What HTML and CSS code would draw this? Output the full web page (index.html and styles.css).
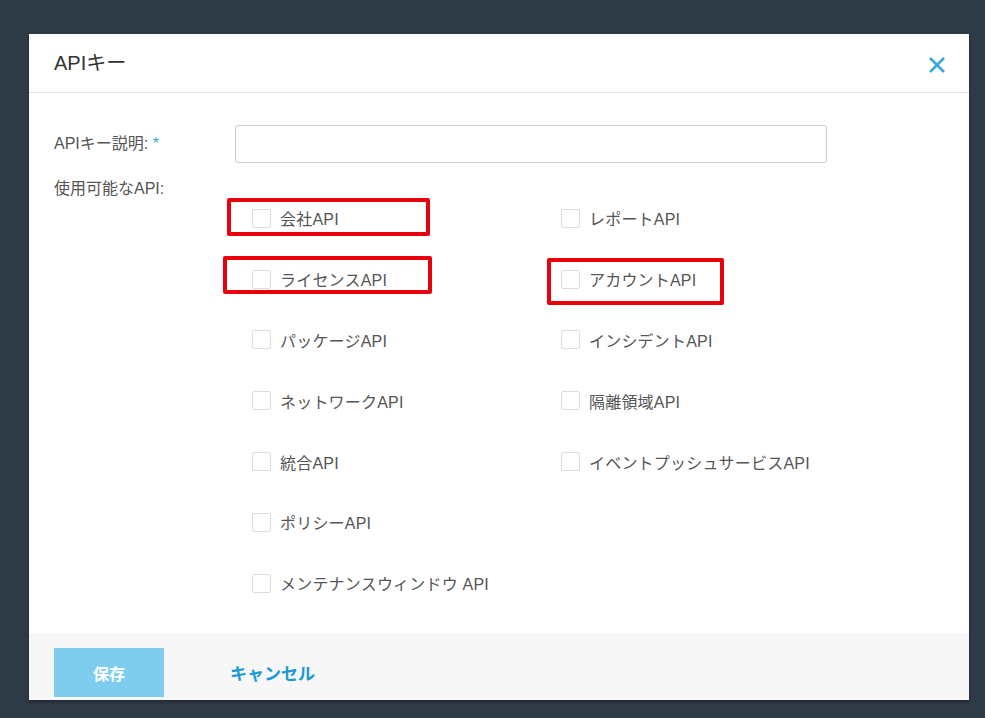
FILE: index.html
```html
<!DOCTYPE html>
<html lang="ja">
<head>
    <meta charset="UTF-8">
    <title>APIキー</title>
    <link rel="stylesheet" href="styles.css">
</head>
<body>
    <div class="modal">
        <!-- Header -->
        <div class="modal-header">
            <h2 class="modal-title">APIキー</h2>
            <span class="modal-close">
                <svg width="18" height="18" viewBox="0 0 18 18"><path d="M2 2 L16 16 M16 2 L2 16" stroke="#3aa6de" stroke-width="2.6" fill="none"/></svg>
            </span>
        </div>

        <!-- Body -->
        <div class="modal-body">
            <div class="form-row">
                <label class="form-label">APIキー説明: <span class="req">*</span></label>
                <input class="form-input" type="text">
            </div>
            <div class="form-label api-label">使用可能なAPI:</div>

            <div class="api-grid">
                <div class="api-item"><span class="mark mark-a"></span><span class="check"></span>会社API</div>
                <div class="api-item"><span class="check"></span>レポートAPI</div>
                <div class="api-item"><span class="mark mark-b"></span><span class="check"></span>ライセンスAPI</div>
                <div class="api-item"><span class="mark mark-c"></span><span class="check"></span>アカウントAPI</div>
                <div class="api-item"><span class="check"></span>パッケージAPI</div>
                <div class="api-item"><span class="check"></span>インシデントAPI</div>
                <div class="api-item"><span class="check"></span>ネットワークAPI</div>
                <div class="api-item"><span class="check"></span>隔離領域API</div>
                <div class="api-item"><span class="check"></span>統合API</div>
                <div class="api-item"><span class="check"></span>イベントプッシュサービスAPI</div>
                <div class="api-item"><span class="check"></span>ポリシーAPI</div>
                <div class="api-item"></div>
                <div class="api-item"><span class="check"></span>メンテナンスウィンドウ API</div>
            </div>
        </div>

        <!-- Footer -->
        <div class="modal-footer">
            <button class="btn-save">保存</button>
            <a class="btn-cancel">キャンセル</a>
        </div>
    </div>
</body>
</html>
```

FILE: styles.css
```css
body {
    margin: 0;
    padding: 34px 16px 0 29px;
    background: #2f3a47;
    font-family: "Liberation Sans", "Noto Sans CJK JP", sans-serif;
    color: #333;
    height: 718px;
    box-sizing: border-box;
    overflow: hidden;
}

.modal {
    width: 940px;
    background: #fff;
    box-shadow: 0 2px 3px rgba(0,0,0,0.3);
}

.modal-header {
    height: 58px;
    border-bottom: 1px solid #e3e3e3;
    display: flex;
    align-items: center;
    justify-content: space-between;
    padding: 0 23px 0 25px;
}

.modal-title {
    margin: 0;
    font-size: 20px;
    font-weight: normal;
    color: #333;
    position: relative;
    top: -2px;
}

.modal-close {
    display: flex;
    position: relative;
    top: 2px;
}

.modal-body {
    padding: 32px 25px 0 25px;
    height: 509px;
}

.form-row {
    display: flex;
    align-items: center;
}

.form-label {
    width: 181px;
    font-size: 16px;
    color: #555;
    position: relative;
    top: -2px;
}

.req {
    color: #3aa6de;
}

.form-input {
    width: 592px;
    height: 38px;
    box-sizing: border-box;
    border: 1px solid #ccc;
    border-radius: 3px;
    margin: 0;
}

.api-label {
    margin-top: 16px;
    line-height: 20px;
    top: 0;
}

.api-grid {
    display: grid;
    grid-template-columns: 309px 309px;
    grid-auto-rows: 60.8px;
    margin: -11px 0 0 198px;
}

.api-item {
    position: relative;
    display: flex;
    align-items: center;
    font-size: 16px;
    letter-spacing: 0.2px;
    color: #555;
}

.check {
    width: 19px;
    height: 19px;
    box-sizing: border-box;
    border: 1px solid #ddd;
    border-radius: 2px;
    margin-right: 9px;
}

/* red highlight annotations */
.mark {
    position: absolute;
    border: 4px solid #e8000b;
    border-radius: 2px;
    box-sizing: border-box;
}

.mark-a {
    left: -25px;
    top: 10px;
    width: 203px;
    height: 38px;
}

.mark-b {
    left: -29px;
    top: 7px;
    width: 209px;
    height: 38px;
}

.mark-c {
    left: -14px;
    top: 9px;
    width: 177px;
    height: 47px;
}

.modal-footer {
    background: #f7f7f7;
    height: 65px;
    display: flex;
    align-items: center;
    padding: 0 25px;
    border-top: 1px solid #f0f0f0;
}

.btn-save {
    width: 110px;
    height: 49px;
    margin-top: 10px;
    background: #7fcdee;
    color: #fff;
    border: none;
    font-family: inherit;
    font-size: 16px;
    font-weight: bold;
}

.btn-cancel {
    margin-left: 66px;
    margin-top: 10px;
    color: #1a9ad6;
    font-size: 17px;
    font-weight: bold;
}
```
